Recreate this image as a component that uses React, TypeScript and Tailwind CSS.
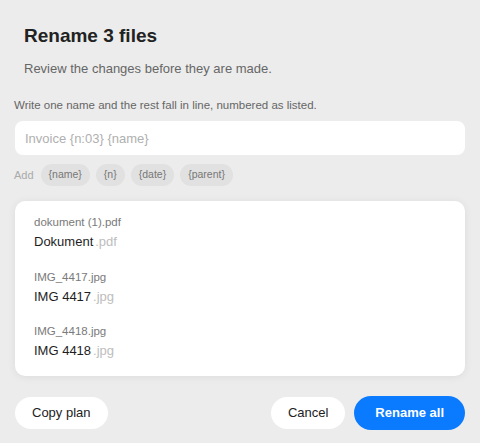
const files = [
  { from: 'dokument (1).pdf', name: 'Dokument', ext: '.pdf' },
  { from: 'IMG_4417.jpg', name: 'IMG 4417', ext: '.jpg' },
  { from: 'IMG_4418.jpg', name: 'IMG 4418', ext: '.jpg' },
];

const tokens = ['{name}', '{n}', '{date}', '{parent}'];

export default function App() {
  return (
    <div className="h-[443px] w-full overflow-hidden bg-[#ececec] px-[15px] font-['Liberation_Sans',Arial,sans-serif]">
      {/* header */}
      <div className="px-[9px] pt-[24px]">
        <h1 className="text-[19px] font-bold leading-[24px] text-[#222]">Rename 3 files</h1>
        <p className="mt-[11px] text-[13px] leading-[20px] text-[#666]">
          Review the changes before they are made.
        </p>
      </div>

      {/* pattern */}
      <p className="mt-[18px] -ml-px text-[11.5px] leading-[16px] text-[#666]">
        Write one name and the rest fall in line, numbered as listed.
      </p>
      <input
        type="text"
        placeholder="Invoice {n:03} {name}"
        className="mt-[8px] block h-[34px] w-full rounded-[8px] bg-white px-[10px] text-[13px] text-[#222] outline-none placeholder:text-[#b0b0b0]"
      />
      <div className="mt-[9px] flex items-center gap-[6px]">
        <span className="-ml-px mr-px text-[11px] text-[#aaa]">Add</span>
        {tokens.map((t) => (
          <button
            key={t}
            className="h-[22px] rounded-full bg-[#e1e1e1] px-[8px] text-[10.5px] text-[#777]"
          >
            {t}
          </button>
        ))}
      </div>

      {/* preview */}
      <div className="mt-[15px] rounded-[10px] bg-white px-[19px] pb-[15px] pt-[13px] shadow-[0_1px_8px_rgba(0,0,0,0.07)]">
        <ul className="flex flex-col gap-[16.5px]">
          {files.map((f) => (
            <li key={f.from}>
              <div className="text-[11.5px] leading-[16px] text-[#7a7a7a]">{f.from}</div>
              <div className="mt-[2px] text-[13px] leading-[20px] text-[#1e1e1e]">
                {f.name}
                <span className="ml-[2px] text-[#bdbdbd]">{f.ext}</span>
              </div>
            </li>
          ))}
        </ul>
      </div>

      {/* actions */}
      <div className="mt-[20px] flex items-center">
        <button className="h-[32px] rounded-full bg-white px-[17px] text-[13px] text-[#222]">
          Copy plan
        </button>
        <div className="ml-auto flex items-center gap-[9px]">
          <button className="h-[32px] rounded-full bg-white px-[17px] text-[13px] text-[#222]">
            Cancel
          </button>
          <button className="h-[34px] rounded-full bg-[#0a7bff] px-[21px] text-[13px] font-bold text-white">
            Rename all
          </button>
        </div>
      </div>
    </div>
  );
}
